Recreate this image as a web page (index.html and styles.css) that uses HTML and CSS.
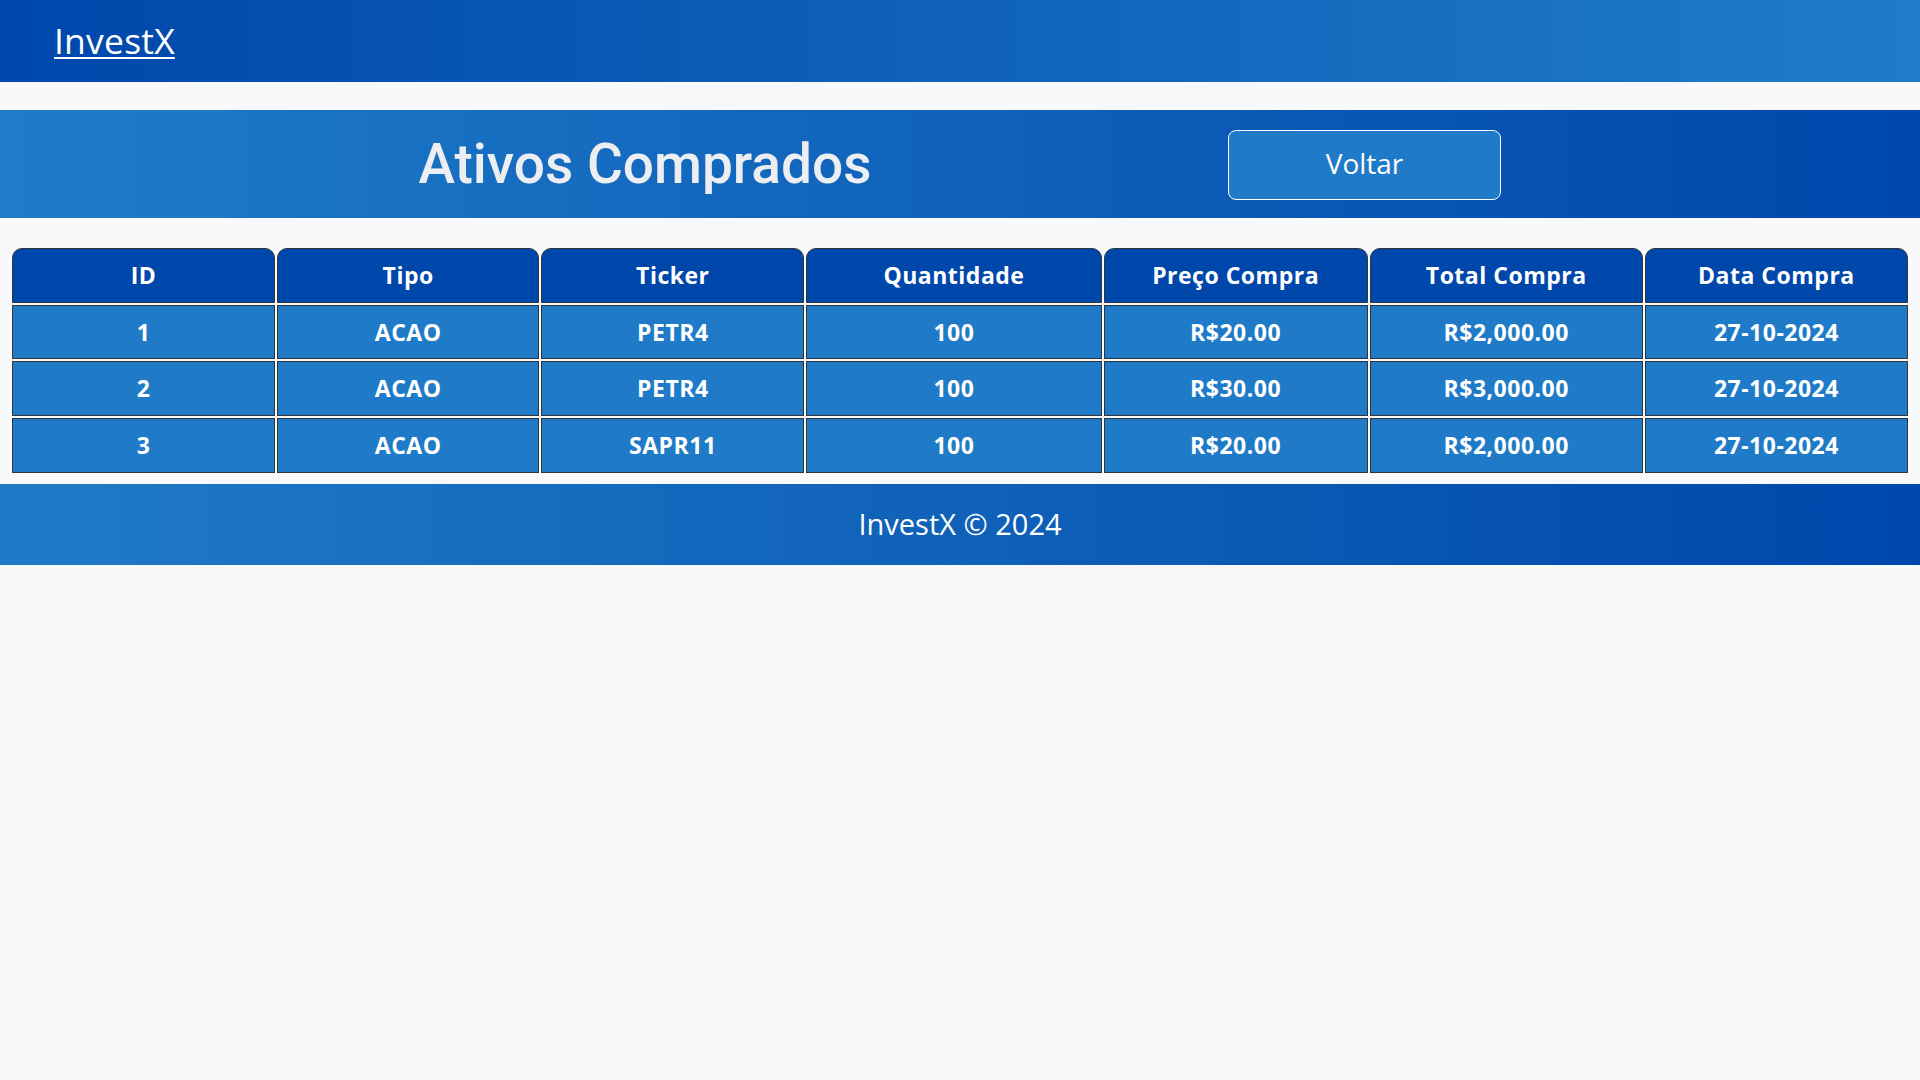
FILE: index.html
```html
<!DOCTYPE html>
<html lang="pt-BR">
<head>
<meta charset="UTF-8">
<title>InvestX - Ativos Comprados</title>
<link rel="stylesheet" href="styles.css">
</head>
<body>
  <header class="topbar">
    <a class="logo" href="#">InvestX</a>
  </header>

  <section class="hero">
    <div class="hero-title-wrap">
      <h1 class="hero-title">Ativos Comprados</h1>
    </div>
    <button class="btn-voltar" type="button">Voltar</button>
  </section>

  <table class="assets">
    <colgroup>
      <col class="c-id">
      <col class="c-tipo">
      <col class="c-ticker">
      <col class="c-qtd">
      <col class="c-preco">
      <col class="c-total">
      <col class="c-data">
    </colgroup>
    <thead>
      <tr>
        <th>ID</th>
        <th>Tipo</th>
        <th>Ticker</th>
        <th>Quantidade</th>
        <th>Preço Compra</th>
        <th>Total Compra</th>
        <th>Data Compra</th>
      </tr>
    </thead>
    <tbody>
      <tr>
        <td>1</td><td>ACAO</td><td>PETR4</td><td>100</td><td>R$20.00</td><td>R$2,000.00</td><td>27-10-2024</td>
      </tr>
      <tr>
        <td>2</td><td>ACAO</td><td>PETR4</td><td>100</td><td>R$30.00</td><td>R$3,000.00</td><td>27-10-2024</td>
      </tr>
      <tr>
        <td>3</td><td>ACAO</td><td>SAPR11</td><td>100</td><td>R$20.00</td><td>R$2,000.00</td><td>27-10-2024</td>
      </tr>
    </tbody>
  </table>

  <footer class="footer">
    <p class="footer-text">InvestX © 2024</p>
  </footer>
</body>
</html>
```

FILE: styles.css
```css
* {
  box-sizing: border-box;
}

html, body {
  margin: 0;
  padding: 0;
}

body {
  background: #f8f9fb;
  font-family: "Open Sans", "Liberation Sans", sans-serif;
  min-height: 1080px;
}

/* Top bar */
.topbar {
  height: 82px;
  display: flex;
  align-items: center;
  padding-left: 54px;
  background: linear-gradient(90deg, #0047ab 0%, #1f7cc8 100%);
}

.logo {
  color: #ffffff;
  font-size: 35.5px;
  line-height: 48px;
  font-weight: 400;
  letter-spacing: 0.2px;
  text-decoration: underline;
  text-decoration-thickness: 2px;
  text-underline-offset: 3px;
  margin-top: -2px;
}

/* Hero */
.hero {
  margin-top: 28px;
  height: 108px;
  display: flex;
  align-items: center;
  gap: 128px;
  padding-left: 190px;
  background: linear-gradient(90deg, #1f7cc8 0%, #0047ab 100%);
}

.hero-title-wrap {
  width: 910px;
  text-align: center;
}

.hero-title {
  margin: 0;
  font-family: Roboto, "Liberation Sans", sans-serif;
  font-weight: 500;
  font-size: 55px;
  line-height: 64px;
  color: #eceef1;
}

.btn-voltar {
  width: 273px;
  height: 70px;
  background: #1f7bc7;
  color: #ffffff;
  border: 1px solid #ffffff;
  border-radius: 8px;
  font-family: "Open Sans", "Liberation Sans", sans-serif;
  font-size: 28px;
  font-weight: 400;
  cursor: pointer;
  padding: 0 0 4px;
  margin-top: 1px;
}

/* Table */
.assets {
  width: 1900px;
  margin: 28px 10px 9px;
  border-collapse: separate;
  border-spacing: 2px;
  table-layout: fixed;
}

.c-id { width: 263px; }
.c-tipo { width: 262px; }
.c-ticker { width: 263px; }
.c-qtd { width: 295px; }
.c-preco { width: 264px; }
.c-total { width: 273px; }
.c-data { width: 263px; }

.assets th,
.assets td {
  border: 1px solid #333333;
  color: #ffffff;
  text-align: center;
  font-weight: 700;
  font-size: 23px;
  letter-spacing: 0.5px;
  line-height: 32.7px;
  padding: 10px 6px;
  white-space: nowrap;
}

.assets th {
  background: #0047ab;
  border-radius: 10px 10px 0 0;
}

.assets td {
  background: #1f7bc7;
}

/* Footer */
.footer {
  height: 81px;
  display: flex;
  align-items: center;
  justify-content: center;
  background: linear-gradient(90deg, #1f7bc7 0%, #0047ab 100%);
}

.footer-text {
  margin: 0;
  color: #ffffff;
  font-size: 29px;
  font-weight: 400;
  line-height: 40px;
}
```
